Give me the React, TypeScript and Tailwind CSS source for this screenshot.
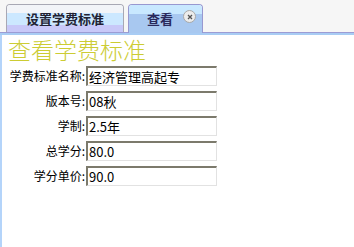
import React from "react";

const rows: [string, string][] = [
  ["学费标准名称:", "经济管理高起专"],
  ["版本号:", "08秋"],
  ["学制:", "2.5年"],
  ["总学分:", "80.0"],
  ["学分单价:", "90.0"],
];

export default function App() {
  const cjk = { fontFamily: '"Noto Sans CJK SC", "Liberation Sans", sans-serif' };
  return (
    <div className="w-[354px] h-[247px] bg-white flex flex-col overflow-hidden" style={cjk}>
      {/* tab bar */}
      <div className="h-[32px] bg-[#f6f6f6] flex items-end pl-[6px] gap-[4px] shrink-0">
        <div className="w-[118px] h-[28px] rounded-t-[4px] border border-b-0 border-[#a8a8b4] flex flex-col overflow-hidden relative">
          <div className="h-[8px] bg-[#f2f4f8]" />
          <div className="h-[12px] bg-[#cce8ff]" />
          <div className="flex-1 bg-[#c8c8f8]" />
          <div className="absolute inset-0 flex items-center justify-center text-[13px] font-bold text-[#222233]">
            设置学费标准
          </div>
        </div>
        <div className="w-[75px] h-[29px] -mb-[1px] z-10 rounded-t-[4px] border border-b-0 border-[#9898d0] flex flex-col overflow-hidden relative">
          <div className="h-[9px] bg-[#c8e8ff]" />
          <div className="flex-1 bg-[#a8c8f0]" />
          <div className="absolute inset-0 flex items-center pl-[18px] text-[13px] font-bold text-[#2a2a5c]">
            查看
          </div>
          <div className="absolute left-[54px] top-[5px] w-[13px] h-[13px] rounded-full bg-[#ececec] border border-[#a8a8a8] flex items-center justify-center">
            <svg width="6" height="6" viewBox="0 0 6 6">
              <path d="M1 1L5 5M5 1L1 5" stroke="#555" strokeWidth="1.3" />
            </svg>
          </div>
        </div>
      </div>
      <div className="h-[1px] bg-[#9c9cd4] shrink-0" />
      <div className="h-[2px] bg-[#a8ccf4] shrink-0" />
      {/* content */}
      <div className="flex-1 border-l-2 border-[#b4d4fa] pl-[6px]">
        <div className="text-[23px] leading-[26px] mt-[1px] text-[#cccc33] font-light">查看学费标准</div>
        <div className="flex flex-col gap-[5px] mt-[4px]">
          {rows.map(([label, value]) => (
            <div key={label} className="flex items-center h-[20px]">
              <div className="w-[77px] mr-[1px] text-right text-[12px] leading-[14px] text-black">{label}</div>
              <div className="w-[131px] h-[20px] border-t-2 border-l-2 border-r border-b border-t-[#7c7a6c] border-l-[#7c7a6c] border-r-[#e2e2e2] border-b-[#e2e2e2] flex items-center pl-[1px] text-[13px] text-black leading-[16px]">
                {value}
              </div>
            </div>
          ))}
        </div>
      </div>
    </div>
  );
}
